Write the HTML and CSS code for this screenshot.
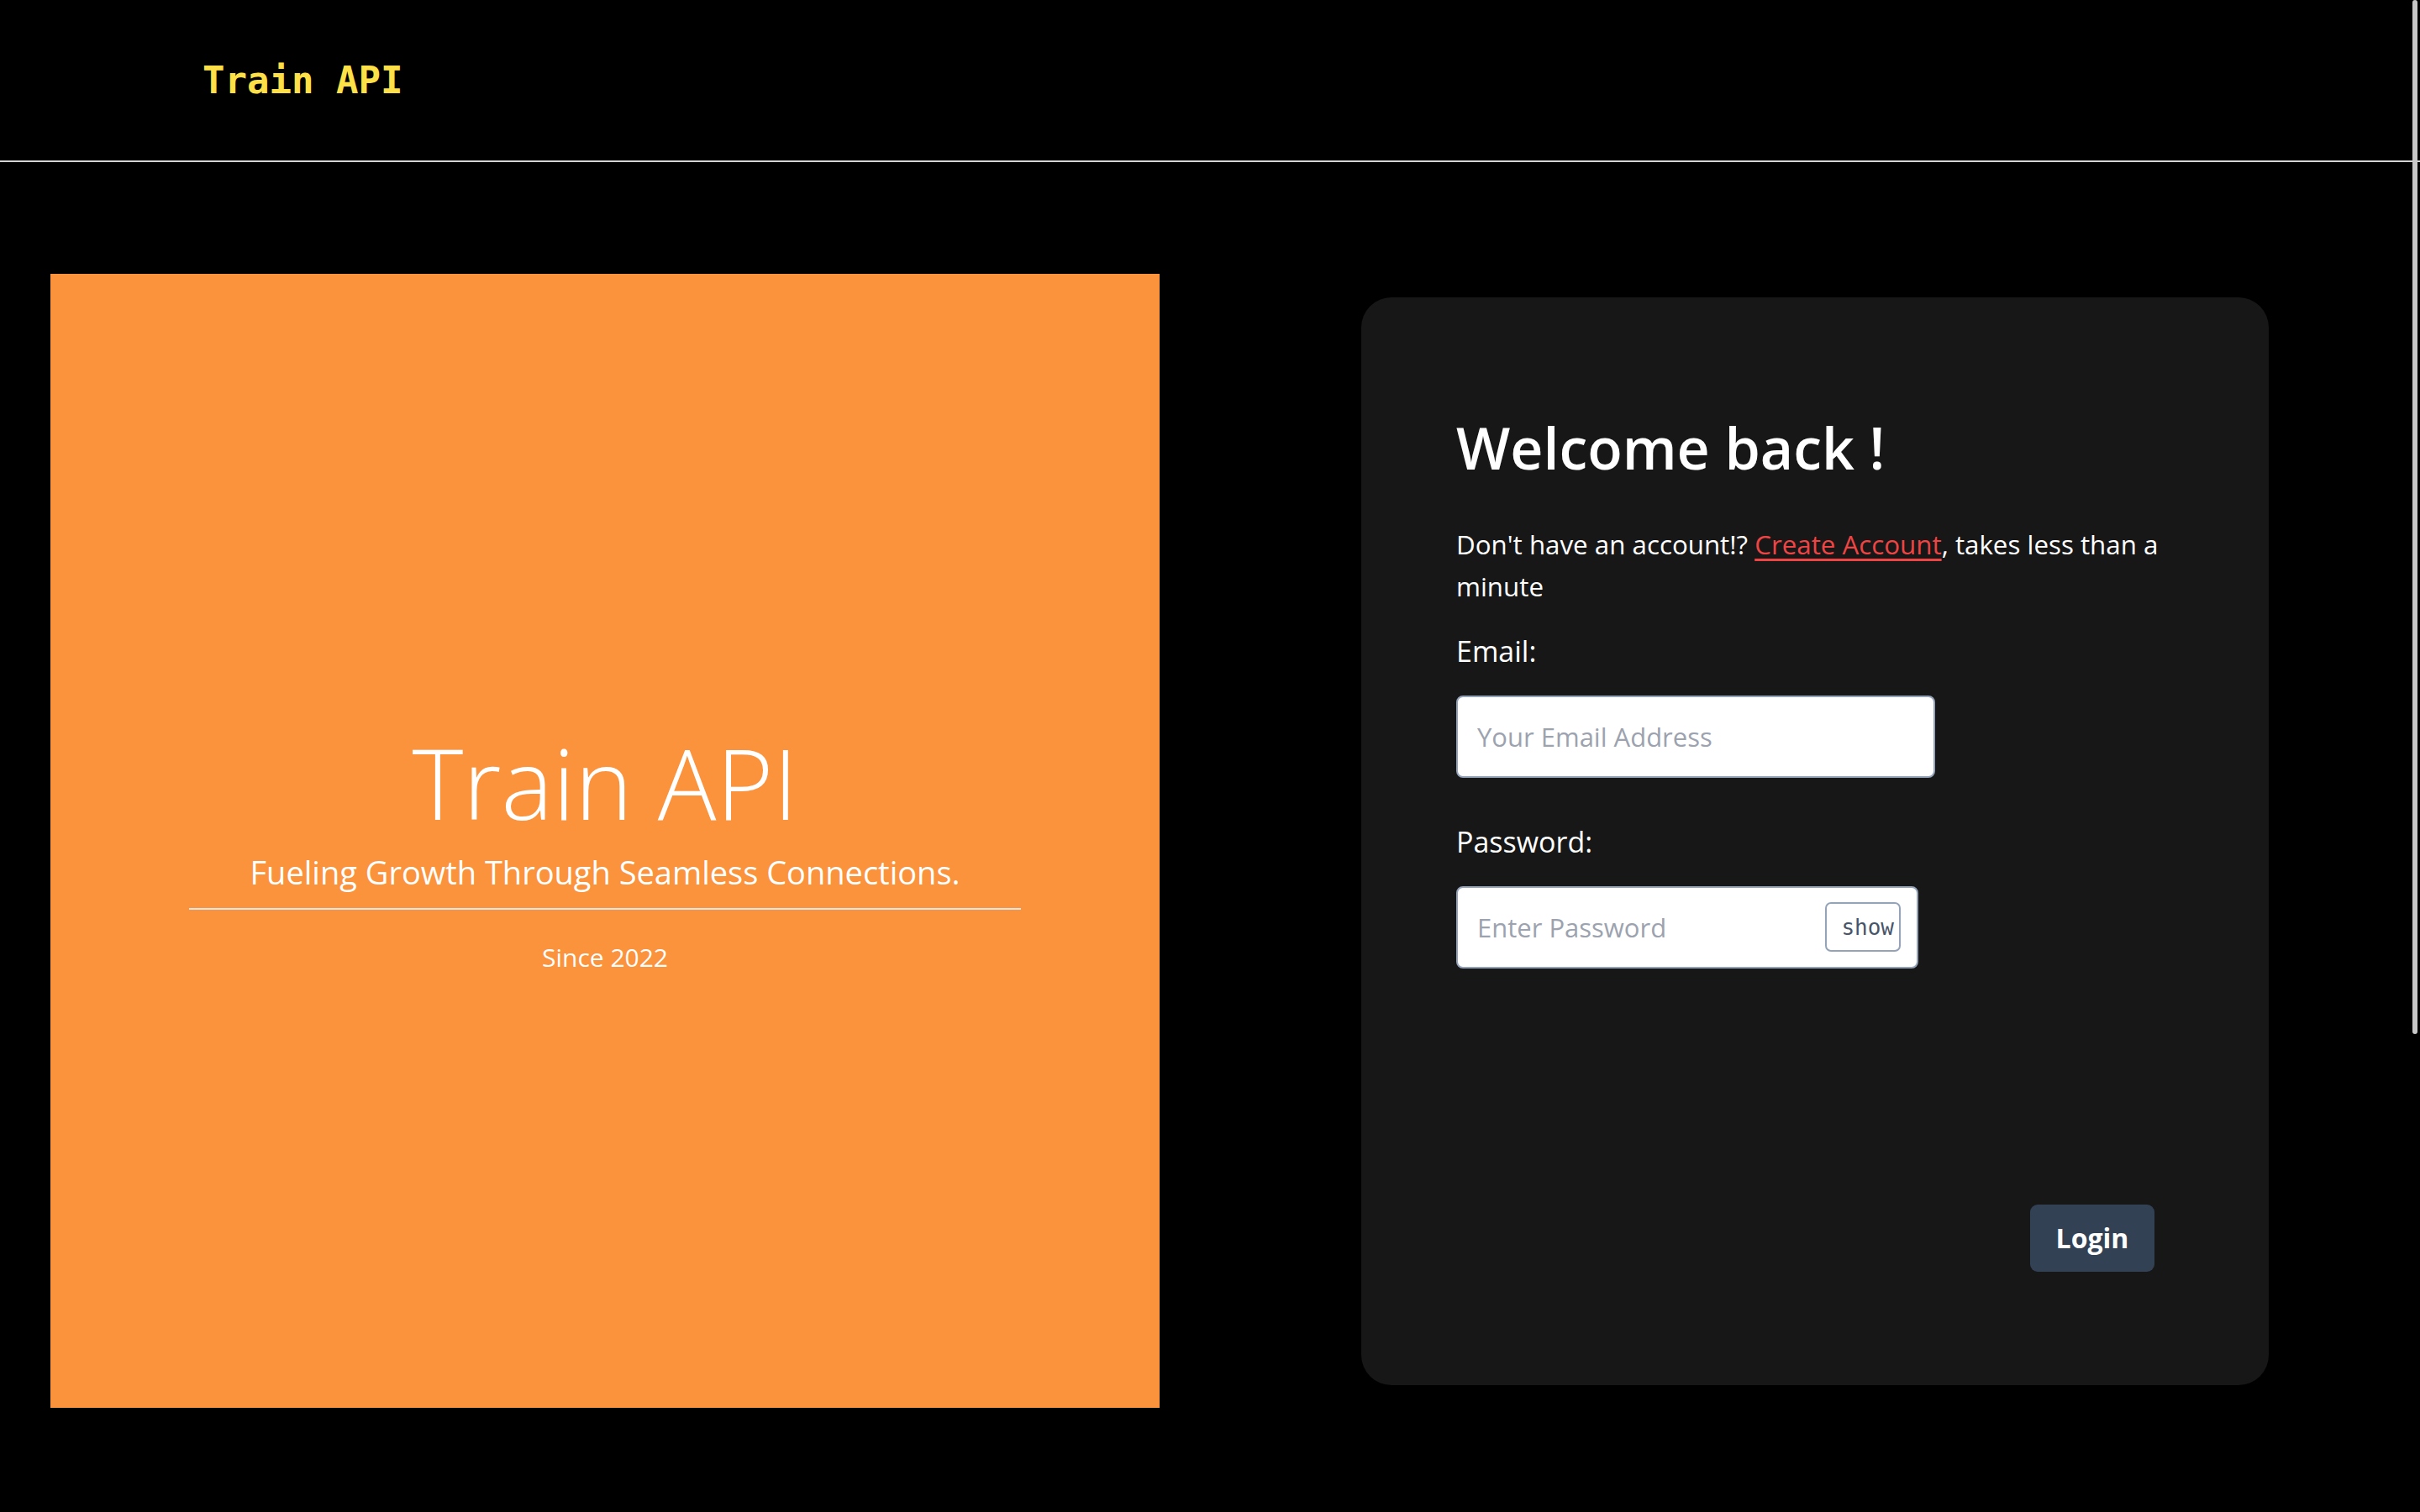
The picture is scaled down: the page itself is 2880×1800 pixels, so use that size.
FILE: index.html
```html
<!DOCTYPE html>
<html lang="en">
<head>
<meta charset="utf-8">
<title>Train API – Login</title>
<link rel="stylesheet" href="styles.css">
</head>
<body>
<header class="topbar">
  <span class="brand">Train API</span>
</header>
<main class="layout">
  <section class="hero">
    <h1 class="hero-title">Train API</h1>
    <p class="hero-sub">Fueling Growth Through Seamless Connections.</p>
    <hr class="hero-rule">
    <p class="hero-since">Since 2022</p>
  </section>
  <div class="card-col">
    <form class="card">
      <h2 class="card-title">Welcome back !</h2>
      <p class="card-text"><span>Don't have an account!? </span><a class="link" href="#">Create Account</a><span>, takes less than a </span><span>minute</span></p>
      <label class="field-label" for="email">Email:</label>
      <input class="text-input email-input" id="email" type="email" placeholder="Your Email Address">
      <label class="field-label pw-label" for="pw">Password:</label>
      <div class="pw-box">
        <input class="pw-input" id="pw" type="password" placeholder="Enter Password">
        <button class="show-btn" type="button">show</button>
      </div>
      <div class="actions">
        <button class="login-btn" type="button">Login</button>
      </div>
    </form>
  </div>
</main>
<div class="scroll-thumb" aria-hidden="true"></div>
</body>
</html>
```

FILE: styles.css
```css
html {
  background: #000;
}
body {
  margin: 0;
  background: #000;
  color: #fff;
  font-family: "Open Sans", "Noto Sans", sans-serif;
}
.scroll-thumb {
  position: fixed;
  top: 0;
  right: 3px;
  width: 6px;
  height: 1231px;
  background: #c8c8c8;
  border-radius: 3px;
}
.topbar {
  height: 191px;
  border-bottom: 2px solid #d4d4d4;
  display: flex;
  align-items: center;
  padding-left: 241px;
}
.brand {
  font-family: "DejaVu Sans Mono", monospace;
  font-weight: 700;
  font-size: 44px;
  color: #fde047;
}
.layout {
  display: grid;
  grid-template-columns: 1440px 1fr;
  align-items: center;
  padding-top: 133px;
  padding-bottom: 957px;
}
.hero {
  margin: 0 60px;
  height: 1350px;
  box-sizing: border-box;
  padding-top: 29px;
  background: #fb923c;
  display: flex;
  flex-direction: column;
  justify-content: center;
  align-items: center;
}
.hero-title {
  margin: 0;
  font-size: 116px;
  font-weight: 300;
  line-height: 1;
}
.hero-sub {
  margin: 27px 0 0;
  font-size: 38px;
  font-weight: 400;
  line-height: 1.2;
}
.hero-rule {
  margin: 20px 0 0;
  width: 990px;
  border: 0;
  border-top: 2px solid #e5e7eb;
}
.hero-since {
  margin: 39px 0 0;
  font-size: 30px;
  line-height: 1.2;
}
.card-col {
  padding-left: 180px;
}
.card {
  width: 1080px;
  box-sizing: border-box;
  background: #171717;
  border-radius: 36px;
  padding: 137px 113px 135px;
  display: flex;
  flex-direction: column;
  align-items: flex-start;
}
.card-title {
  margin: 0;
  font-size: 68px;
  font-weight: 600;
  line-height: 84px;
}
.card-text {
  margin: 48px 0 0;
  font-size: 31.3px;
  line-height: 50px;
}
.link {
  color: #ef4444;
  text-decoration: underline;
  text-underline-offset: 5px;
}
.field-label {
  margin-top: 32px;
  font-size: 34px;
  line-height: 41px;
}
.pw-label {
  margin-top: 56px;
}
.text-input,
.pw-box {
  margin-top: 32px;
  height: 98px;
  box-sizing: border-box;
  border: 2px solid #94a3b8;
  border-radius: 8px;
  background: #fff;
}
.text-input {
  width: 570px;
  padding: 0 23px;
  font-family: inherit;
  font-size: 31px;
  color: #111;
  outline: none;
}
.text-input::placeholder,
.pw-input::placeholder {
  color: #9ca3af;
}
.pw-box {
  width: 550px;
  display: flex;
  align-items: center;
  padding: 0 19px 0 23px;
}
.pw-input {
  flex: 1;
  min-width: 0;
  border: 0;
  outline: none;
  padding: 0;
  background: transparent;
  font-family: inherit;
  font-size: 31px;
  color: #111;
}
.show-btn {
  width: 90px;
  height: 59px;
  box-sizing: border-box;
  border: 2px solid #94a3b8;
  border-radius: 7px;
  background: #fff;
  color: #475569;
  font-family: "DejaVu Sans Mono", monospace;
  font-size: 26px;
  text-align: right;
  padding: 0 6px 0 0;
}
.actions {
  align-self: stretch;
  display: flex;
  justify-content: flex-end;
  padding-right: 23px;
  margin-top: 281px;
}
.login-btn {
  width: 148px;
  height: 80px;
  border: 0;
  border-radius: 9px;
  background: #334155;
  color: #fff;
  font-family: inherit;
  font-weight: 700;
  font-size: 32px;
}
```
